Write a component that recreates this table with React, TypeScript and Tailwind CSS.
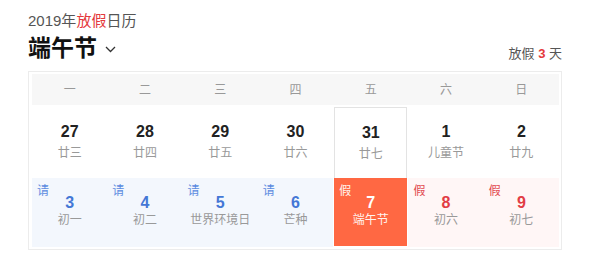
import React from "react";

const weekdays = ["一", "二", "三", "四", "五", "六", "日"];

const row1 = [
  { d: "27", l: "廿三" },
  { d: "28", l: "廿四" },
  { d: "29", l: "廿五" },
  { d: "30", l: "廿六" },
  { d: "31", l: "廿七", today: true },
  { d: "1", l: "儿童节" },
  { d: "2", l: "廿九" },
];

type Kind = "work" | "main" | "off";
const row2: { d: string; l: string; k: Kind }[] = [
  { d: "3", l: "初一", k: "work" },
  { d: "4", l: "初二", k: "work" },
  { d: "5", l: "世界环境日", k: "work" },
  { d: "6", l: "芒种", k: "work" },
  { d: "7", l: "端午节", k: "main" },
  { d: "8", l: "初六", k: "off" },
  { d: "9", l: "初七", k: "off" },
];

export default function App() {
  return (
    <div className="w-[600px] h-[258px] bg-white font-['Liberation_Sans','Noto_Sans_CJK_SC',sans-serif] overflow-hidden">
      <div className="pl-[28px] pr-[38px] pt-[12px]">
        <div className="text-[15px] leading-[18px] text-[#555]">
          2019年<span className="text-[#e4393c]">放假</span>日历
        </div>
        <div className="mt-[4px] flex items-end justify-between">
          <div className="flex items-center">
            <span className="text-[23px] leading-[28px] font-bold text-[#111]">端午节</span>
            <svg width="11" height="7" viewBox="0 0 11 7" className="ml-[8px] mt-[2px]">
              <path d="M1 1 L5.5 5.5 L10 1" fill="none" stroke="#333" strokeWidth="1.3" />
            </svg>
          </div>
          <div className="text-[13px] leading-[16px] text-[#555]">
            放假 <span className="text-[#e4393c] font-bold">3</span> 天
          </div>
        </div>
        <div className="mt-[9px] border border-[#ececec] pt-[2px] pb-[2px] pl-[3px] pr-[2px]">
          <div className="grid grid-cols-7 h-[31px] bg-[#f7f7f7]">
            {weekdays.map((w) => (
              <div key={w} className="flex items-center justify-center text-[12px] text-[#999]">
                {w}
              </div>
            ))}
          </div>
          <div className="grid grid-cols-7 h-[73px]">
            {row1.map((c) => (
              <div key={c.d} className="flex">
                <div
                  className={
                    "flex-1 flex flex-col items-center pt-[15px] " +
                    (c.today ? "mx-[1px] mt-[2px] border-x border-t border-[#e3e3e3]" : "pt-[17px]")
                  }
                >
                  <div className="text-[16px] leading-[20px] font-bold text-[#222]">{c.d}</div>
                  <div className="mt-[3px] text-[12px] leading-[16px] text-[#999]">{c.l}</div>
                </div>
              </div>
            ))}
          </div>
          <div className="grid grid-cols-7 h-[69px]">
            {row2.map((c) => {
              const bg =
                c.k === "work" ? "bg-[#f3f7fd]" : c.k === "main" ? "bg-[#ff6843] mx-[1px] mb-[1px]" : "bg-[#fff6f6]";
              const tag =
                c.k === "work" ? "text-[#5b8be0]" : c.k === "main" ? "text-[#fff3ee]" : "text-[#e24a50]";
              const date =
                c.k === "work" ? "text-[#4477d6]" : c.k === "main" ? "text-white" : "text-[#e23d45]";
              const lunar = c.k === "main" ? "text-[#fff3ee]" : "text-[#999]";
              return (
                <div key={c.d} className={"relative flex flex-col items-center pt-[16px] " + bg}>
                  <span className={"absolute left-[5px] top-[5px] text-[12px] leading-[16px] " + (c.k === "main" ? "left-[3px] " : "") + tag}>
                    {c.k === "work" ? "请" : "假"}
                  </span>
                  <div className={"text-[16px] leading-[18px] font-bold " + date}>{c.d}</div>
                  <div className={"text-[12px] leading-[16px] " + lunar}>{c.l}</div>
                </div>
              );
            })}
          </div>
        </div>
      </div>
    </div>
  );
}
